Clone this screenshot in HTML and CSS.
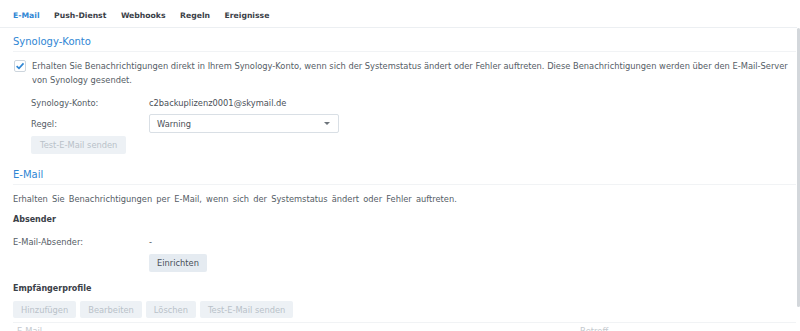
FILE: index.html
```html
<!DOCTYPE html>
<html lang="de">
<head>
  <meta charset="UTF-8" />
  <title>Benachrichtigung</title>
  <link rel="stylesheet" href="styles.css">
</head>
<body>
  <nav class="tabs">
    <a class="tab active">E-Mail</a>
    <a class="tab">Push-Dienst</a>
    <a class="tab">Webhooks</a>
    <a class="tab">Regeln</a>
    <a class="tab">Ereignisse</a>
  </nav>

  <div class="pane">
    <main class="content">
      <h2 class="section-title">Synology-Konto</h2>

      <div class="account">
        <label class="check-row">
          <svg class="checkbox" width="12" height="12" viewBox="0 0 12 12">
            <rect x="0.5" y="0.5" width="11" height="11" rx="1.5" fill="#fff" stroke="#cdd5dd"/>
            <path d="M2.6 6.1 L5 8.4 L9.5 3.4" fill="none" stroke="#2f86d4" stroke-width="1.6"/>
          </svg>
          <span>Erhalten Sie Benachrichtigungen direkt in Ihrem Synology-Konto, wenn sich der Systemstatus ändert oder Fehler auftreten. Diese Benachrichtigungen werden über den <span class="nowrap">E-Mail-Server</span> von Synology gesendet.</span>
        </label>

        <div class="account-fields">
          <div class="field">
            <span class="field-label">Synology-Konto:</span>
            <span class="field-value">c2backuplizenz0001@skymail.de</span>
          </div>
          <div class="field">
            <span class="field-label">Regel:</span>
            <div class="select">
              <span>Warning</span>
              <span class="caret"></span>
            </div>
          </div>
          <button class="btn test-btn" disabled>Test-E-Mail senden</button>
        </div>
      </div>

      <h2 class="section-title mail-title">E-Mail</h2>
      <p class="desc">Erhalten Sie Benachrichtigungen per E-Mail, wenn sich der Systemstatus ändert oder Fehler auftreten.</p>

      <h3 class="group-title">Absender</h3>
      <div class="field sender-field">
        <span class="field-label">E-Mail-Absender:</span>
        <span class="field-value">-</span>
      </div>
      <div class="field setup-field">
        <span class="field-label"></span>
        <button class="btn enabled">Einrichten</button>
      </div>

      <h3 class="group-title recipients-title">Empfängerprofile</h3>
      <div class="toolbar">
        <button class="btn" disabled>Hinzufügen</button>
        <button class="btn" disabled>Bearbeiten</button>
        <button class="btn" disabled>Löschen</button>
        <button class="btn" disabled>Test-E-Mail senden</button>
      </div>

      <div class="grid-head">
        <span class="col-mail">E-Mail</span>
        <span class="col-subject">Betreff</span>
      </div>
    </main>

    <div class="scrollbar">
      <div class="thumb"></div>
    </div>
  </div>
</body>
</html>
```

FILE: styles.css
```css
* {
  margin: 0;
  padding: 0;
  box-sizing: border-box;
}

body {
  font-family: 'DejaVu Sans', Verdana, sans-serif;
  font-size: 8.3px;
  color: #555d66;
  background: #fff;
  height: 331px;
  overflow: hidden;
}

/* tab strip */
.tabs {
  display: flex;
  gap: 14.5px;
  height: 28px;
  align-items: center;
  padding: 4px 13px 0;
  border-bottom: 1px solid #eceff2;
  margin-right: 3px;
}

.tab {
  font-weight: bold;
  font-size: 7.7px;
  color: #3a4047;
}

.tab.active {
  color: #2f86d4;
}

/* content + fake scrollbar */
.pane {
  display: flex;
  height: 303px;
}

.content {
  flex: 1;
  overflow: hidden;
}

.scrollbar {
  width: 4px;
  flex: none;
  padding: 0 0 0 1px;
}

.thumb {
  height: 279px;
  background: #d3d7db;
  border-radius: 2px;
}

.section-title {
  font-size: 10px;
  font-weight: normal;
  color: #2f86d4;
  margin-left: 13px;
  height: 24px;
  padding-top: 8px;
  border-bottom: 1px solid #f1f3f5;
}

.mail-title {
  margin-top: 7px;
}

.account {
  padding: 7px 0 0 14px;
}

.check-row {
  display: flex;
  gap: 6px;
  line-height: 14px;
  padding-right: 4px;
}

.nowrap {
  white-space: nowrap;
}

.checkbox {
  flex: none;
  margin-top: 1px;
}

.account-fields {
  padding: 5px 0 0 17px;
}

.field {
  display: flex;
  align-items: center;
  height: 21px;
}

.field-label {
  width: 118px;
  flex: none;
}

.field-value {
  color: #4a5058;
}

.select {
  width: 190px;
  height: 19px;
  border: 1px solid #d9dfe5;
  border-radius: 2px;
  display: flex;
  align-items: center;
  justify-content: space-between;
  padding: 0 8px 0 7px;
  color: #4a5058;
}

.caret {
  width: 0;
  height: 0;
  border-left: 3px solid transparent;
  border-right: 3px solid transparent;
  border-top: 3px solid #6d747b;
}

.btn {
  font-family: inherit;
  font-size: 8.3px;
  height: 18px;
  padding: 0 8px;
  border: none;
  border-radius: 2px;
  background: #edf1f5;
  color: #b9c1c9;
}

.btn.enabled {
  background: #e5ebf1;
  color: #4a5058;
}

.test-btn {
  margin-top: 2px;
  padding: 0 9px;
}

.desc {
  margin: 7px 0 0 13px;
  line-height: 14px;
  word-spacing: 1.5px;
}

.group-title {
  font-size: 8px;
  font-weight: bold;
  color: #3a4047;
  margin: 7px 0 0 13px;
  line-height: 14px;
}

.sender-field,
.setup-field {
  padding-left: 13px;
}

.sender-field {
  margin-top: 4px;
}

.setup-field {
  height: 20px;
  align-items: flex-end;
}

.sender-field .field-label,
.setup-field .field-label {
  width: 136px;
}

.recipients-title {
  margin-top: 10px;
}

.toolbar {
  display: flex;
  gap: 4px;
  padding-left: 13px;
  margin-top: 5px;
}

.toolbar .btn {
  height: 17px;
}

.grid-head {
  margin: 4px 0 0 13px;
  border-top: 1px solid #f1f3f5;
  display: flex;
  height: 20px;
  padding-top: 3px;
  color: #c4c9ce;
}

.col-mail {
  padding-left: 4px;
  width: 567px;
}
```
